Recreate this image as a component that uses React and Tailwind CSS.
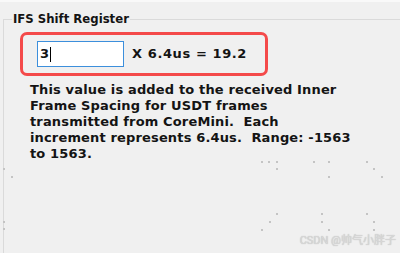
import React from 'react'

const dots = [
  [261, 161], [268, 161], [276, 161], [313, 161], [328, 161], [366, 161],
  [276, 168], [373, 168], [3, 168],
  [328, 176], [381, 176], [11, 176],
  [276, 213], [321, 213], [366, 213],
  [269, 221], [321, 221], [373, 221], [3, 221],
  [261, 229], [328, 229], [373, 229], [3, 228],
]

export default function App() {
  return (
    <div className="relative w-[400px] h-[253px] overflow-hidden bg-[#f0f0f0] text-[#141414]" style={{ fontFamily: '"DejaVu Sans", Verdana, sans-serif' }}>
      <div className="h-[2px] bg-[#f9f9f9]" />
      <div className="relative mt-[17px] ml-[3px] h-[240px] border-l border-t border-[#dadada]">
        <div className="absolute -top-[9px] left-[8px] bg-[#f0f0f0] px-[1px] text-[13px] font-bold leading-[16px]" style={{ fontFamily: '"DejaVu Sans Condensed", "DejaVu Sans", sans-serif', fontStretch: 'condensed' }}>IFS Shift Register</div>

        <div className="ml-[16px] mt-[12px] w-[248px] h-[44px] rounded-[7px] border-[3px] border-[#f44a4a] flex items-center pl-[14px]">
          <div className="w-[87px] h-[26px] bg-white border border-[#3c8fdc] flex items-center pl-[2px] text-[13px] font-bold">
            <span>3</span>
            <span className="w-px h-[15px] bg-black ml-px" />
          </div>
          <span className="ml-[8px] text-[13px] font-bold tracking-[0.6px]">X 6.4us = 19.2</span>
        </div>

        <p className="ml-[26px] mt-[6px] text-[13px] font-bold leading-[16px] tracking-[0.15px]">
          This value is added to the received Inner<br />
          Frame Spacing for USDT frames<br />
          transmitted from CoreMini.&nbsp; Each<br />
          increment represents 6.4us.&nbsp; Range: -1563<br />
          to 1563.
        </p>
      </div>

      {dots.map(([x, y], i) => (
        <span key={i} className="absolute w-[2px] h-[2px] bg-[#c4c4c4]" style={{ left: x, top: y }} />
      ))}

      <div className="absolute right-[4px] bottom-[7px] text-[11px] text-[#d8d8d8] leading-none" style={{ fontFamily: 'Roboto, "Noto Sans CJK SC", sans-serif', textShadow: '0 0 1px #b0b0b0' }}>
        CSDN @帅气小胖子
      </div>
    </div>
  )
}
